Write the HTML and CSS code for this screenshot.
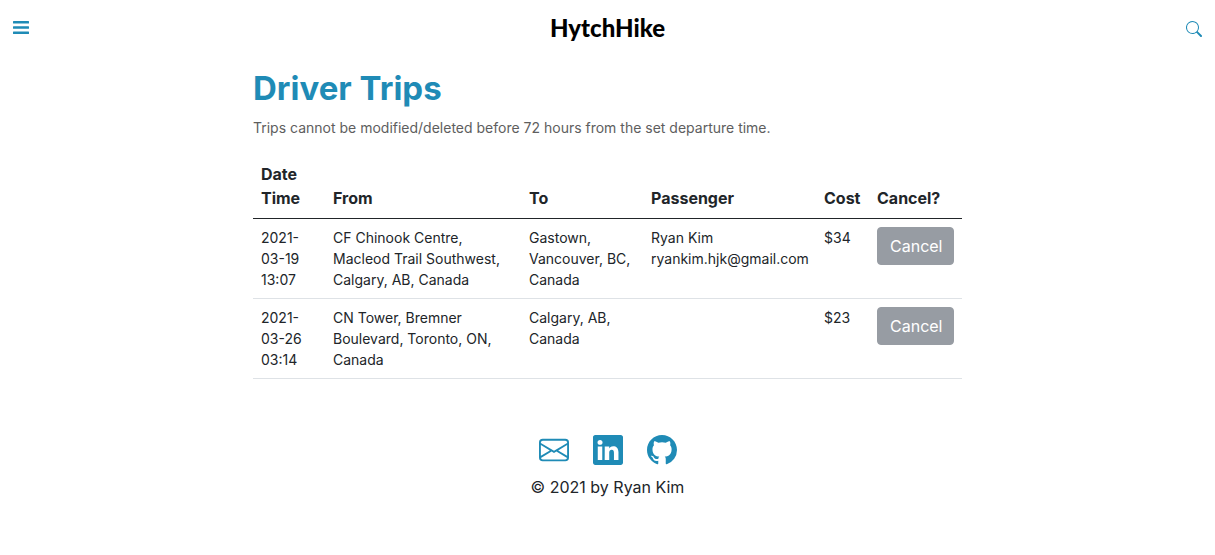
FILE: index.html
```html
<!DOCTYPE html>
<html lang="en">

<head>
    <meta charset="UTF-8" />
    <meta name="viewport" content="width=device-width, initial-scale=1.0" />
    <title>HytchHike</title>
    <link rel="stylesheet" href="styles.css">
</head>

<body>
    <header class="navbar">
        <button class="icon-btn" type="button" aria-label="Menu">
            <svg width="16" height="14" viewBox="0 0 16 14" fill="currentColor">
                <rect x="0" y="0" width="16" height="2.6" rx="0.5" />
                <rect x="0" y="5.2" width="16" height="2.6" rx="0.5" />
                <rect x="0" y="10.4" width="16" height="2.6" rx="0.5" />
            </svg>
        </button>
        <a class="brand" href="#">HytchHike</a>
        <button class="icon-btn" type="button" aria-label="Search">
            <svg width="16" height="18" viewBox="0 -2 16 18" fill="currentColor">
                <path d="M11.742 10.344a6.5 6.5 0 1 0-1.397 1.398h-.001c.03.04.062.078.098.115l3.85 3.85a1 1 0 0 0 1.415-1.414l-3.85-3.85a1.007 1.007 0 0 0-.115-.1zM12 6.5a5.5 5.5 0 1 1-11 0 5.5 5.5 0 0 1 11 0z" />
            </svg>
        </button>
    </header>

    <main class="container">
        <h1 class="title">Driver Trips</h1>
        <p class="note">Trips cannot be modified/deleted before 72 hours from the set departure time.</p>

        <table class="table">
            <thead>
                <tr>
                    <th class="col-date" scope="col">Date Time</th>
                    <th class="col-from" scope="col">From</th>
                    <th class="col-to" scope="col">To</th>
                    <th class="col-passenger" scope="col">Passenger</th>
                    <th class="col-cost" scope="col">Cost</th>
                    <th class="col-cancel" scope="col">Cancel?</th>
                </tr>
            </thead>
            <tbody>
                <tr>
                    <td>2021-03-19 13:07</td>
                    <td>CF Chinook Centre, Macleod Trail Southwest, Calgary, AB, Canada</td>
                    <td>Gastown, Vancouver, BC, Canada</td>
                    <td>Ryan Kim<br>ryankim.hjk@gmail.com</td>
                    <td>$34</td>
                    <td><button class="btn" type="button" disabled>Cancel</button></td>
                </tr>
                <tr>
                    <td>2021-03-26 03:14</td>
                    <td>CN Tower, Bremner Boulevard, Toronto, ON, Canada</td>
                    <td>Calgary, AB, Canada</td>
                    <td></td>
                    <td>$23</td>
                    <td><button class="btn" type="button" disabled>Cancel</button></td>
                </tr>
            </tbody>
        </table>
    </main>

    <footer class="footer">
        <div class="social">
            <a href="#" aria-label="Email">
                <svg width="30" height="30" viewBox="0 0 16 16" fill="currentColor">
                    <path d="M0 4a2 2 0 0 1 2-2h12a2 2 0 0 1 2 2v8a2 2 0 0 1-2 2H2a2 2 0 0 1-2-2V4zm2-1a1 1 0 0 0-1 1v.217l7 4.2 7-4.2V4a1 1 0 0 0-1-1H2zm13 2.383l-4.758 2.855L15 11.114v-5.73zm-.034 6.878L9.271 8.82 8 9.583 6.728 8.82l-5.694 3.44A1 1 0 0 0 2 13h12a1 1 0 0 0 .966-.739zM1 11.114l4.758-2.876L1 5.383v5.73z" />
                </svg>
            </a>
            <a href="#" aria-label="LinkedIn">
                <svg width="30" height="30" viewBox="0 0 16 16" fill="currentColor">
                    <path d="M0 1.146C0 .513.526 0 1.175 0h13.65C15.474 0 16 .513 16 1.146v13.708c0 .633-.526 1.146-1.175 1.146H1.175C.526 16 0 15.487 0 14.854V1.146zm4.943 12.248V6.169H2.542v7.225h2.401zm-1.2-8.212c.837 0 1.358-.554 1.358-1.248-.015-.709-.52-1.248-1.342-1.248-.822 0-1.359.54-1.359 1.248 0 .694.521 1.248 1.327 1.248h.016zm4.908 8.212V9.359c0-.216.016-.432.08-.586.173-.431.568-.878 1.232-.878.869 0 1.216.662 1.216 1.634v3.865h2.401V9.25c0-2.22-1.184-3.252-2.764-3.252-1.274 0-1.845.7-2.165 1.193v.025h-.016a5.54 5.54 0 0 1 .016-.025V6.169h-2.4c.03.678 0 7.225 0 7.225h2.4z" />
                </svg>
            </a>
            <a href="#" aria-label="GitHub">
                <svg width="30" height="30" viewBox="0 0 16 16" fill="currentColor">
                    <path d="M8 0C3.58 0 0 3.58 0 8c0 3.54 2.29 6.53 5.47 7.59.4.07.55-.17.55-.38 0-.19-.01-.82-.01-1.49-2.01.37-2.53-.49-2.69-.94-.09-.23-.48-.94-.82-1.13-.28-.15-.68-.52-.01-.53.63-.01 1.08.58 1.23.82.72 1.21 1.87.87 2.33.66.07-.52.28-.87.51-1.07-1.78-.2-3.64-.89-3.64-3.95 0-.87.31-1.59.82-2.15-.08-.2-.36-1.02.08-2.12 0 0 .67-.21 2.2.82.64-.18 1.32-.27 2-.27.68 0 1.36.09 2 .27 1.53-1.04 2.2-.82 2.2-.82.44 1.1.16 1.92.08 2.12.51.56.82 1.27.82 2.15 0 3.07-1.87 3.75-3.65 3.95.29.25.54.73.54 1.48 0 1.07-.01 1.93-.01 2.2 0 .21.15.46.55.38A8.012 8.012 0 0 0 16 8c0-4.42-3.58-8-8-8z" />
                </svg>
            </a>
        </div>
        <p class="copyright">© 2021 by Ryan Kim</p>
    </footer>
</body>

</html>
```
FILE: styles.css
```css
* {
    box-sizing: border-box;
    margin: 0;
    padding: 0;
}

body {
    font-family: Inter, "Liberation Sans", sans-serif;
    font-size: 16px;
    line-height: 24px;
    color: #212529;
    background: #fff;
}

.navbar {
    display: flex;
    justify-content: space-between;
    align-items: center;
    height: 56px;
    padding: 0 13px;
}

.icon-btn {
    display: flex;
    border: none;
    background: none;
    color: #1f8bb6;
    cursor: pointer;
}

.brand {
    font-family: Lato, sans-serif;
    font-size: 24px;
    font-weight: 900;
    color: #000;
    text-decoration: none;
}

.container {
    max-width: 709px;
    margin: 0 auto;
    padding-top: 11px;
}

.title {
    font-size: 33px;
    line-height: 42px;
    font-weight: 700;
    color: #1f8bb6;
}

.note {
    margin-top: 8px;
    font-size: 14px;
    line-height: 21px;
    color: #5e5e5e;
}

.table {
    width: 100%;
    margin-top: 16px;
    border-collapse: collapse;
    table-layout: fixed;
    font-size: 14px;
    line-height: 21px;
}

.table th,
.table td {
    padding: 8px;
    text-align: left;
    vertical-align: top;
    border-bottom: 1px solid #dee2e6;
}

.table th {
    font-size: 16px;
    line-height: 24px;
    font-weight: 700;
    vertical-align: bottom;
    border-bottom-color: #212529;
}

.col-date {
    width: 72px;
}

.col-from {
    width: 196px;
}

.col-to {
    width: 122px;
}

.col-passenger {
    width: 173px;
}

.col-cost {
    width: 53px;
}

.btn {
    width: 100%;
    padding: 6px 12px;
    border: 1px solid #979ca3;
    border-radius: 4px;
    background: #979ca3;
    color: #fff;
    font-family: inherit;
    font-size: 16px;
    line-height: 24px;
}

.footer {
    margin-top: 56px;
    text-align: center;
}

.social {
    display: flex;
    justify-content: center;
    gap: 24px;
}

.social a {
    display: flex;
    color: #1f8bb6;
}

.copyright {
    margin-top: 10px;
}
```
